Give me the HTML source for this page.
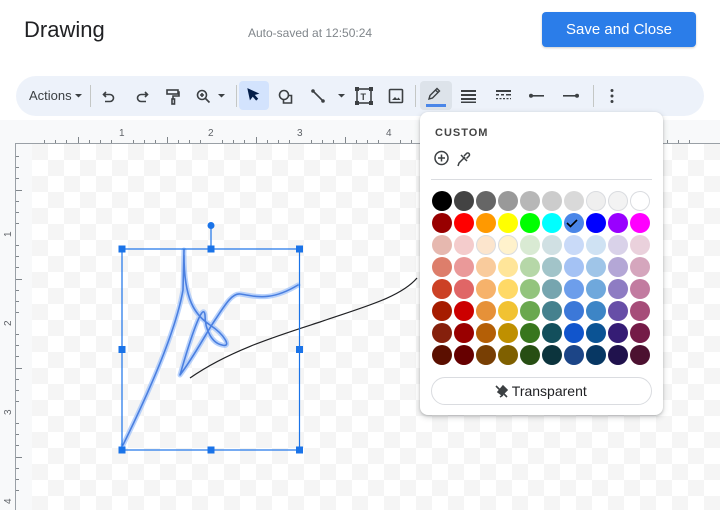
<!DOCTYPE html>
<html><head><meta charset="utf-8">
<style>
*{margin:0;padding:0;box-sizing:border-box}
body{width:720px;height:510px;overflow:hidden;background:#fff;font-family:"Liberation Sans",sans-serif;position:relative}
.abs{position:absolute}
#title{left:24px;top:17px;font-size:22px;color:#202124}
#saved{left:248px;top:26px;font-size:12px;color:#80868b}
#btn{left:542px;top:12px;width:154px;height:35px;background:#2b7de9;border-radius:4px;color:#fff;font-size:15px;text-align:center;line-height:35px;box-shadow:0 1px 2px rgba(0,0,0,.2)}
#bar{left:16px;top:76px;width:688px;height:40px;background:#edf2fa;border-radius:20px}
#canvasbg{left:0;top:120px;width:720px;height:390px;background:#f8f9fa}
#check{left:32px;top:144px;width:688px;height:366px;background:conic-gradient(#fff 25%,#f5f5f5 0 50%,#fff 0 75%,#f5f5f5 0) 0 0/32px 32px}
#pop{left:420px;top:112px;width:243px;height:303px;background:#fff;border-radius:8px;box-shadow:0 2px 6px rgba(60,64,67,.25),0 1px 2px rgba(60,64,67,.2)}
#custom{left:435px;top:127px;font-size:11px;font-weight:bold;letter-spacing:1px;color:#444}
#trans{left:431px;top:377px;width:221px;height:28px;border:1px solid #dadce0;border-radius:14px;font-size:14px;color:#202124;text-align:center;line-height:26px}
</style></head><body>
<div class="abs" id="title">Drawing</div>
<div class="abs" id="saved">Auto-saved at 12:50:24</div>
<div class="abs" id="btn">Save and Close</div>
<div class="abs" id="canvasbg"></div>
<div class="abs" id="check"></div>
<div class="abs" id="bar"></div>
<svg class="abs" style="left:0;top:0" width="720" height="510" id="s">
<g font-family="Liberation Sans,sans-serif" font-size="13" fill="#3c4043">
<text x="29" y="100">Actions</text>
</g>
<path d="M75 94l3.5 3.5 3.5-3.5z" fill="#3c4043"/>
<g stroke="#c4c7c5" stroke-width="1"><line x1="90.5" y1="85" x2="90.5" y2="107"/><line x1="236.5" y1="85" x2="236.5" y2="107"/><line x1="415.5" y1="85" x2="415.5" y2="107"/><line x1="593.5" y1="85" x2="593.5" y2="107"/></g>
<g fill="none" stroke="#3c4043" stroke-width="1.6">
<path d="M106 92l-2.5 2.5 2.5 2.5M104 94.5h6a3.5 3.5 0 0 1 0 7h-5"/>
<path d="M145 92l2.5 2.5-2.5 2.5M147 94.5h-6a3.5 3.5 0 0 0 0 7h5"/>
<rect x="167" y="90" width="11" height="4"/><path d="M178 92h1v4h-6v3"/><rect x="172" y="99" width="2.5" height="5"/>
<circle cx="202" cy="95" r="4.5"/><path d="M205.5 98.5l4 4M200 95h4M202 93v4"/>
<circle cx="284" cy="95" r="4.5"/><path d="M288 95.5h3.5v7.5h-8v-3.5"/>
<path d="M313 91l10 10"/>
<rect x="357" y="89" width="14" height="14"/>
<rect x="389.5" y="89.5" width="13" height="13" rx="1"/>
</g>
<path d="M218 94l3.5 3.5 3.5-3.5zM338 94l3.5 3.5 3.5-3.5z" fill="#3c4043"/>
<rect x="239" y="81" width="30" height="29" rx="4" fill="#d3e3fd"/>
<path d="M248 89l10 4.5-4 1.2 3.5 4-1.3 1.2-3.5-4-2.5 3.3z" fill="#041e49" stroke="#041e49" stroke-width="1"/>
<g fill="#3c4043"><circle cx="313" cy="91" r="1.8"/><circle cx="323" cy="101" r="1.8"/>
<rect x="355" y="87" width="4" height="4"/><rect x="369" y="87" width="4" height="4"/><rect x="355" y="101" width="4" height="4"/><rect x="369" y="101" width="4" height="4"/>
<text x="360.5" y="100" font-size="9" font-weight="bold" font-family="Liberation Sans">T</text>
<path d="M392 100l3-3 2 2 1.5-1.5 2 2.5z"/>
</g>
<rect x="420" y="81" width="32" height="29" rx="4" fill="#dde3ea"/>
<rect x="426" y="104" width="20" height="3" fill="#4a86e8"/>
<path d="M429 99l1-3.5 7-7 2.5 2.5-7 7zM435.5 90l2.5 2.5" fill="none" stroke="#3c4043" stroke-width="1.4"/>
<g fill="#3c4043">
<rect x="461" y="90" width="15" height="2"/><rect x="461" y="94" width="15" height="2"/><rect x="461" y="98" width="15" height="2"/><rect x="461" y="101.5" width="15" height="1.5"/>
<rect x="496" y="90" width="15" height="2"/><path d="M496 94h3v1.5h-3zM501 94h3v1.5h-3zM506 94h5v1.5h-5zM496 98h2v1.2h-2zM499.5 98h2v1.2h-2zM503 98h2v1.2h-2zM506.5 98h2v1.2h-2zM510 98h1v1.2h-1z"/>
<rect x="530" y="95" width="14" height="1.6"/><circle cx="531" cy="95.8" r="2"/>
<rect x="563" y="95" width="14" height="1.6"/><circle cx="577" cy="95.8" r="2"/>
<circle cx="612" cy="90.5" r="1.5"/><circle cx="612" cy="96" r="1.5"/><circle cx="612" cy="101.5" r="1.5"/>
</g>
<g id="rul" stroke="#80868b" stroke-width="1"></g>
<g id="rnum" font-family="Liberation Sans,sans-serif" font-size="10" fill="#5f6368"></g>
<path d="M190 378C230 350 280 335 320 322C360 308 400 298 417 278" fill="none" stroke="#202124" stroke-width="1.2"/>
<g fill="none" stroke-linecap="round" stroke-linejoin="round">
<path d="M123 445C150 390 176 330 183 290L184 250M184 255C184 300 195 315 210 325C225 335 232 348 222 345C212 343 205 330 205 315C203 300 190 340 180 375C195 355 205 335 215 320C225 305 232 293 240 294C255 296 270 302 298 285" stroke="#a8c7fa" stroke-width="5" opacity=".8"/>
<path d="M123 445C150 390 176 330 183 290L184 250M184 255C184 300 195 315 210 325C225 335 232 348 222 345C212 343 205 330 205 315C203 300 190 340 180 375C195 355 205 335 215 320C225 305 232 293 240 294C255 296 270 302 298 285" stroke="#4a7fe0" stroke-width="1.6"/>
</g>
<g stroke="#1a73e8" stroke-width="1.2" fill="none"><rect x="122" y="249" width="177.5" height="201"/><line x1="211" y1="226" x2="211" y2="249"/></g>
<g fill="#1a73e8">
<circle cx="211" cy="225.5" r="3.5"/>
<rect x="118.5" y="245.5" width="7" height="7"/><rect x="207.5" y="245.5" width="7" height="7"/><rect x="296" y="245.5" width="7" height="7"/>
<rect x="118.5" y="346" width="7" height="7"/><rect x="296" y="346" width="7" height="7"/>
<rect x="118.5" y="446.5" width="7" height="7"/><rect x="207.5" y="446.5" width="7" height="7"/><rect x="296" y="446.5" width="7" height="7"/>
</g>
</svg>
<div class="abs" id="pop"></div>
<div class="abs" id="custom">CUSTOM</div>
<svg class="abs" style="left:0;top:0" width="720" height="510" id="p">
<g fill="none" stroke="#3c4043" stroke-width="1.5">
<circle cx="441.5" cy="158" r="6.5"/><path d="M441.5 154.5v7M438 158h7"/>
<path d="M458 166l1-3 6-6M461 155l6 6M464 156l2.5-2.5a1.5 1.5 0 0 1 2.5 2.5l-2.5 2.5"/>
</g>
<line x1="431" y1="179.5" x2="652" y2="179.5" stroke="#dadce0"/>
<g id="dots"></g>
<path d="M496 386l11 11M498 392l5-6 4 4-5 5zM500 397l3-2" stroke="#3c4043" stroke-width="1.6" fill="#3c4043"/>
</svg>
<div class="abs" id="trans">&nbsp;&nbsp;&nbsp;&nbsp;Transparent</div>
<script>
var NS="http://www.w3.org/2000/svg";
function el(p,t,a){var e=document.createElementNS(NS,t);for(var k in a)e.setAttribute(k,a[k]);p.appendChild(e);return e;}
var rul=document.getElementById('rul'),rn=document.getElementById('rnum');
el(rul,'line',{x1:16,y1:143.5,x2:720,y2:143.5,stroke:'#9aa0a6'});
el(rul,'line',{x1:15.5,y1:143,x2:15.5,y2:510,stroke:'#9aa0a6'});
for(var i=0;i<60;i++){var x=33+i*11.125;if(x>720)break;var h=(i%8==0)?0:(i%4==0?6:3);
 if(i%8!=0)el(rul,'line',{x1:Math.round(x)+.5,y1:143,x2:Math.round(x)+.5,y2:143-h});
 var y=145+i*11.125;if(y<510&&i%8!=0)el(rul,'line',{x1:16,y1:Math.round(y)+.5,x2:16+h,y2:Math.round(y)+.5});}
for(var n=1;n<=4;n++){var t=el(rn,'text',{x:33+n*89-3,y:136});t.textContent=n;
 var t2=el(rn,'text',{x:0,y:0,transform:'translate(11,'+(145+n*89+3)+') rotate(-90)'});t2.textContent=n;}
var C=[["000000","434343","666666","999999","b7b7b7","cccccc","d9d9d9","efefef","f3f3f3","ffffff"],
["980000","ff0000","ff9900","ffff00","00ff00","00ffff","4a86e8","0000ff","9900ff","ff00ff"],
["e6b8af","f4cccc","fce5cd","fff2cc","d9ead3","d0e0e3","c9daf8","cfe2f3","d9d2e9","ead1dc"],
["dd7e6b","ea9999","f9cb9c","ffe599","b6d7a8","a2c4c9","a4c2f4","9fc5e8","b4a7d6","d5a6bd"],
["cc4125","e06666","f6b26b","ffd966","93c47d","76a5af","6d9eeb","6fa8dc","8e7cc3","c27ba0"],
["a61c00","cc0000","e69138","f1c232","6aa84f","45818e","3c78d8","3d85c6","674ea7","a64d79"],
["85200c","990000","b45f06","bf9000","38761d","134f5c","1155cc","0b5394","351c75","741b47"],
["5b0f00","660000","783f04","7f6000","274e13","0c343d","1c4587","073763","20124d","4c1130"]];
var d=document.getElementById('dots');
for(var r=0;r<8;r++)for(var c=0;c<10;c++){var col=C[r][c];var light=(r==0&&c>=7)||(r==2&&(c==2||c==3));
 el(d,'circle',{cx:442+c*22,cy:201+r*22,r:light?9.5:10,fill:'#'+col,stroke:light?'#dadce0':'none','stroke-width':1});}
el(d,'path',{d:'M567 223l3.5 3.5 6.5-6.5',fill:'none',stroke:'#000','stroke-width':1.6});
</script>
</body></html>
